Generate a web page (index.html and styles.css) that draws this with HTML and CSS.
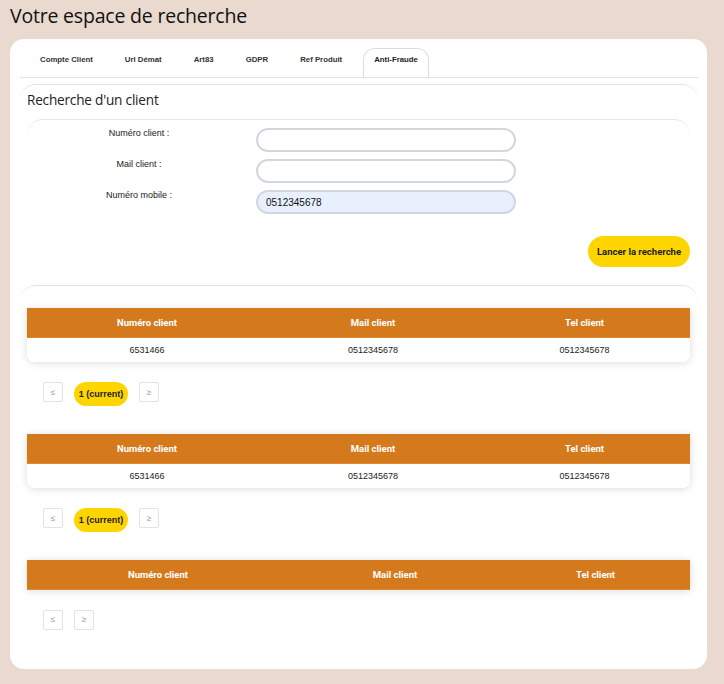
FILE: index.html
```html
<!DOCTYPE html>
<html lang="fr">
<head>
<meta charset="utf-8">
<title>Votre espace de recherche</title>
<link rel="stylesheet" href="styles.css">
</head>
<body>
<h1 class="page-title">Votre espace de recherche</h1>
<div class="card">
  <nav class="tabs">
    <a class="tab">Compte Client</a>
    <a class="tab">Url Démat</a>
    <a class="tab">Art83</a>
    <a class="tab">GDPR</a>
    <a class="tab">Ref Produit</a>
    <a class="tab active">Anti-Fraude</a>
  </nav>

  <section class="panel search-panel">
    <h2 class="panel-title">Recherche d'un client</h2>
    <div class="form-card">
      <div class="form-row">
        <label class="form-label">Numéro client :</label>
        <input class="form-input" type="text">
      </div>
      <div class="form-row">
        <label class="form-label">Mail client :</label>
        <input class="form-input" type="text">
      </div>
      <div class="form-row">
        <label class="form-label">Numéro mobile :</label>
        <input class="form-input filled" type="text" value="0512345678">
      </div>
      <div class="form-actions">
        <button class="btn-search">Lancer la recherche</button>
      </div>
    </div>
  </section>

  <section class="panel results-panel">
    <div class="result-block">
      <div class="table-wrap rounded">
        <table class="data-table">
          <thead><tr><th class="c1">Numéro client</th><th class="c2">Mail client</th><th class="c3">Tel client</th></tr></thead>
          <tbody><tr><td>6531466</td><td>0512345678</td><td>0512345678</td></tr></tbody>
        </table>
      </div>
      <div class="pager">
        <span class="page-btn">≤</span>
        <span class="page-current">1 (current)</span>
        <span class="page-btn">≥</span>
      </div>
    </div>

    <div class="result-block">
      <div class="table-wrap rounded">
        <table class="data-table">
          <thead><tr><th class="c1">Numéro client</th><th class="c2">Mail client</th><th class="c3">Tel client</th></tr></thead>
          <tbody><tr><td>6531466</td><td>0512345678</td><td>0512345678</td></tr></tbody>
        </table>
      </div>
      <div class="pager">
        <span class="page-btn">≤</span>
        <span class="page-current">1 (current)</span>
        <span class="page-btn">≥</span>
      </div>
    </div>

    <div class="result-block">
      <div class="table-wrap">
        <table class="data-table empty">
          <thead><tr><th class="c1">Numéro client</th><th class="c2">Mail client</th><th class="c3">Tel client</th></tr></thead>
        </table>
      </div>
      <div class="pager">
        <span class="page-btn">≤</span>
        <span class="page-btn">≥</span>
      </div>
    </div>
  </section>
</div>
</body>
</html>
```

FILE: styles.css
```css
* { box-sizing: border-box; }

body {
  margin: 0;
  background: #e9d9cf;
  font-family: "Liberation Sans", Arial, sans-serif;
  color: #222;
}

.page-title {
  margin: 0;
  padding: 3px 0 0 10px;
  height: 39px;
  font-family: "Open Sans", "Noto Sans", sans-serif;
  font-weight: 400;
  font-size: 19.5px;
  line-height: 26px;
  color: #111;
  letter-spacing: -0.2px;
}

.card {
  margin: 0 17px 0 10px;
  background: #fff;
  border-radius: 14px;
  padding: 9px 9px 10px 10px;
  height: 630px;
}

/* Tabs */
.tabs {
  display: flex;
  gap: 10px;
  padding-left: 9px;
  border-bottom: 1px solid #e2e2e2;
  height: 30px;
}

.tab {
  display: flex;
  align-items: center;
  padding: 0 10px 8px 10px;
  height: 29px;
  font-size: 7.8px;
  font-weight: 700;
  color: #333;
  border: 1px solid transparent;
  border-bottom: none;
  border-radius: 12px 12px 0 0;
}

.tab.active {
  border-color: #dcdcdc;
  color: #222;
}

/* Panels */
.panel {
  border-top: 1px solid #e3e3e3;
  border-radius: 16px 16px 0 0;
}

.search-panel {
  margin-top: 6px;
  padding: 5px 8px 0 7px;
  margin-bottom: 18px;
}

.panel-title {
  margin: 0;
  font-family: "Open Sans", "Noto Sans", sans-serif;
  font-weight: 400;
  font-size: 13.6px;
  line-height: 20px;
  color: #222;
  letter-spacing: -0.2px;
}

.form-card {
  margin-top: 9px;
  border-top: 1px solid #e6e6e6;
  border-radius: 16px 16px 0 0;
  padding-top: 8px;
  display: flex;
  flex-direction: column;
  gap: 7px;
}

.form-row {
  display: flex;
  align-items: flex-start;
}

.form-label {
  width: 224px;
  margin-right: 5px;
  text-align: center;
  font-size: 9px;
  line-height: 11px;
  color: #222;
}

.form-input {
  width: 260px;
  height: 24px;
  border: 2px solid #d2d7df;
  border-radius: 12px;
  padding: 0 8px;
  font-family: "Liberation Sans", Arial, sans-serif;
  font-size: 10px;
  color: #111;
  background: #fff;
  outline: none;
}

.form-input.filled {
  background: #e8f0fe;
}

.form-actions {
  display: flex;
  justify-content: flex-end;
  margin-top: 15px;
}

.btn-search {
  width: 102px;
  height: 31px;
  border: none;
  border-radius: 16px;
  background: #ffd500;
  font-family: Roboto, "Liberation Sans", sans-serif;
  font-weight: 700;
  font-size: 9.5px;
  color: #222;
  padding: 0;
}

/* Results */
.results-panel {
  padding: 22px 8px 0 7px;
}

.table-wrap {
  box-shadow: 0 1px 8px rgba(0, 0, 0, 0.14);
  overflow: hidden;
}

.table-wrap.rounded {
  border-radius: 0 0 8px 8px;
}

.data-table {
  width: 100%;
  border-collapse: collapse;
  table-layout: fixed;
}

.data-table th {
  background: #d47a1d;
  color: #fff;
  font-family: Roboto, "Liberation Sans", sans-serif;
  font-weight: 700;
  font-size: 9.5px;
  height: 29px;
  padding: 0;
  text-align: center;
  border-bottom: 1px solid #e0882a;
}

.data-table td {
  background: #fff;
  font-size: 9px;
  color: #222;
  height: 25px;
  padding: 0;
  text-align: center;
}

.data-table .c1 { width: 240px; }
.data-table .c2 { width: 212px; }
.data-table .c3 { width: 211px; }

.data-table.empty .c1 { width: 262px; }
.data-table.empty .c2 { width: 212px; }
.data-table.empty .c3 { width: 189px; }

.pager {
  display: flex;
  align-items: flex-start;
  gap: 11px;
  margin: 20px 0 28px 16px;
}

.page-btn {
  width: 20px;
  height: 20px;
  border: 1px solid #e2e2e2;
  border-radius: 2px;
  display: flex;
  align-items: center;
  justify-content: center;
  font-size: 8px;
  color: #8c8c8c;
}

.page-current {
  width: 54px;
  height: 24px;
  border-radius: 12px;
  background: #ffd500;
  display: flex;
  align-items: center;
  justify-content: center;
  font-size: 9px;
  font-weight: 700;
  color: #222;
}
```
